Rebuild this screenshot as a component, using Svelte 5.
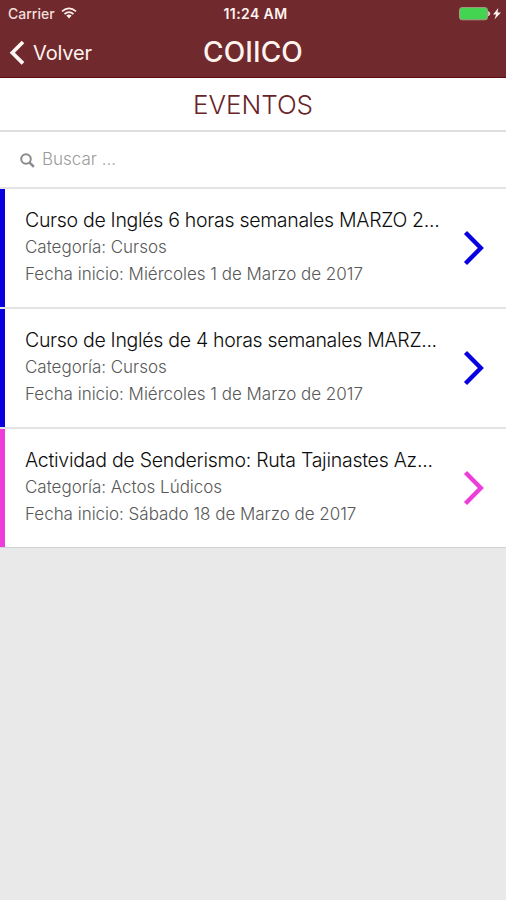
<script>
  const events = [
    { title: 'Curso de Inglés 6 horas semanales MARZO 2...', category: 'Cursos', date: 'Miércoles 1 de Marzo de 2017', color: '#0800df', spacing: -0.3 },
    { title: 'Curso de Inglés de 4 horas semanales MARZ...', category: 'Cursos', date: 'Miércoles 1 de Marzo de 2017', color: '#0800df', spacing: -0.3 },
    { title: 'Actividad de Senderismo: Ruta Tajinastes Az...', category: 'Actos Lúdicos', date: 'Sábado 18 de Marzo de 2017', color: '#ee3cda', spacing: -0.25 }
  ];
</script>

<div class="screen">
  <header>
    <div class="status">
      <div class="carrier">
        <span>Carrier</span>
        <svg width="16" height="12" viewBox="0 0 16 12" fill="none" stroke="#fbeeea" stroke-width="1.7">
          <path d="M1 4.3Q8 -1.7 15 4.3M3.5 7Q8 3.3 12.5 7" />
          <path d="M5.3 8.6Q8 6.5 10.7 8.6L8 11.5Z" fill="#fbeeea" stroke="none" />
        </svg>
      </div>
      <span class="time">11:24 AM</span>
      <svg class="battery" width="44" height="16" viewBox="0 0 44 16">
        <rect x="1.5" y="1.6" width="28" height="12.2" rx="2.6" fill="#43d551" stroke="#a99a82" />
        <path d="M30.6 5.5Q33 7.7 30.6 9.9Z" fill="#fbeeea" stroke="#fbeeea" stroke-width=".6" />
        <path d="M40.3 2L35.1 8.6H38.1L36.5 13.6L42.9 6.6H39.5Z" fill="#fff3ef" />
      </svg>
    </div>
    <nav>
      <div class="back">
        <svg width="16" height="26" viewBox="0 0 16 26"><path d="M14 2L3.3 12.7L14 23.4" fill="none" stroke="#fff8f4" stroke-width="3.7" /></svg>
        <span>Volver</span>
      </div>
      <h1>COIICO</h1>
    </nav>
  </header>
  <h2>EVENTOS</h2>
  <div class="search">
    <svg width="16" height="16" viewBox="0 0 16 16" fill="none" stroke="#8b8b8b">
      <circle cx="6" cy="6" r="4.8" stroke-width="2" />
      <path d="M9.6 9.6L13.9 13.9" stroke-width="2.6" />
    </svg>
    <span>Buscar ...</span>
  </div>
  <ul>
    {#each events as event}
      <li style="--accent: {event.color}; --spacing: {event.spacing}px">
        <div class="info">
          <h3>{event.title}</h3>
          <p>Categoría: {event.category}</p>
          <p>Fecha inicio: {event.date}</p>
        </div>
        <svg width="22" height="36" viewBox="0 0 22 36"><path d="M2.5 2.5L17.8 18L2.5 33.5" fill="none" stroke={event.color} stroke-width="4.4" /></svg>
      </li>
    {/each}
  </ul>
</div>

<style>
  :global(body) { margin: 0; background: #e9e9e9; }
  .screen { height: 900px; overflow: hidden; background: #e9e9e9; font-family: Inter, "Liberation Sans", sans-serif; }
  header { box-sizing: border-box; height: 78px; background: #702a2d; border-bottom: 1px solid #5d0b10; color: #fff3ef; }
  .status { display: grid; grid-template-columns: 1fr auto 1fr; align-items: center; height: 26px; padding: 0 4px 0 8px; font-size: 14px; line-height: 26px; }
  .carrier { display: flex; align-items: center; gap: 6px; color: #f3dfdb; font-weight: 500; }
  .carrier span { padding-top: 1px; }
  .carrier svg { margin-top: -1px; }
  .time { padding-top: 1px; margin-left: 1px; font-weight: 600; letter-spacing: .4px; }
  .battery { justify-self: end; }
  nav { display: grid; grid-template-columns: 1fr auto 1fr; align-items: center; height: 51px; padding: 0 0 0 9px; }
  .back { display: flex; align-items: center; gap: 8px; font-size: 20px; letter-spacing: -.15px; }
  h1 { margin: 0; padding-right: 9px; font-size: 28px; font-weight: 450; line-height: 53px; letter-spacing: .1px; }
  h2 { box-sizing: border-box; height: 54px; margin: 0; border-bottom: 2px solid #dedede; background: #fff; color: #682429; text-align: center; font-size: 26px; font-weight: 300; line-height: 54px; }
  .search { box-sizing: border-box; display: flex; align-items: center; gap: 6px; height: 55px; padding: 0 19px 2px 20px; background: #fff; color: #9b9b9b; font-size: 17px; font-weight: 300; }
  .search svg { margin-top: 5px; }
  ul { margin: 0; padding: 0; list-style: none; border-bottom: 1px solid #d3d3d3; }
  li { box-sizing: border-box; position: relative; display: flex; justify-content: space-between; height: 120px; padding: 18px 21px 0 25px; border-top: 2px solid #e4e4e4; background: #fff; }
  li::before { content: ""; position: absolute; inset: 0 auto 0 0; width: 5px; background: var(--accent); }
  li > svg { margin-top: 23px; }
  .info { white-space: nowrap; width: 420px; }
  h3 { margin: 0 0 1px; color: #0c0c0c; font-size: 19.5px; font-weight: 350; line-height: 26px; letter-spacing: var(--spacing); }
  p { margin: 0; color: #585858; font-size: 17px; font-weight: 300; line-height: 27px; letter-spacing: -.02px; }
</style>
